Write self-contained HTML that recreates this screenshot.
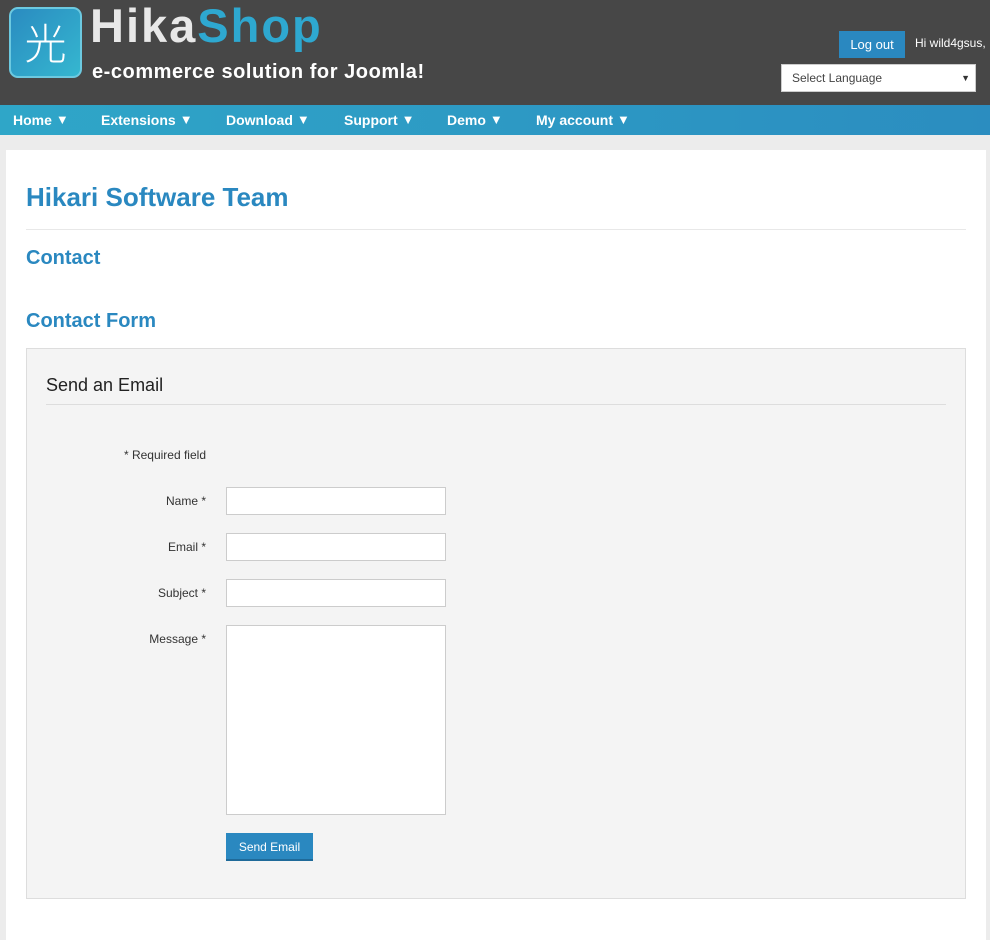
<!DOCTYPE html>
<html><head><style>
*{box-sizing:border-box;margin:0;padding:0}
body{width:990px;height:930px;overflow:hidden;background:#ececec;font-family:"Liberation Sans",Arial,sans-serif;position:relative}
.hdr{position:absolute;left:0;top:0;width:990px;height:105px;background:#474747}
.logo{position:absolute;left:9px;top:7px;width:73px;height:71px;border-radius:9px;background:linear-gradient(135deg,#2a8bc0,#35b7d0);border:2px solid #6cc9e0}
.logo span{position:absolute;left:0;top:8px;width:69px;text-align:center;color:#fff;font-size:42px;font-family:"Noto Sans CJK SC",sans-serif;font-weight:300;line-height:50px}
.brand{position:absolute;left:90px;top:-2px;font-size:47px;font-weight:bold;letter-spacing:2px}
.tag{position:absolute;left:92px;top:61px;color:#fff;font-size:20px;font-weight:bold;letter-spacing:0.55px}
.lo{position:absolute;left:839px;top:31px;width:66px;height:27px;background:#2a88c0;color:#fff;font-size:13px;text-align:center;line-height:27px}
.hi{position:absolute;left:915px;top:36px;color:#fff;font-size:12px}
.sel{position:absolute;left:781px;top:64px;width:195px;height:28px;background:#fff;border:1px solid #ccc;font-size:12px;color:#444;padding:6px 10px}
.sel b{position:absolute;right:5px;top:8px;font-size:9px;color:#333}
.nav{position:absolute;left:0;top:105px;width:990px;height:30px;background:linear-gradient(90deg,#2fa6c8,#2b8dc0)}
.nav span{position:absolute;top:7px;color:#fff;font-weight:bold;font-size:14px}
.nav i{font-style:normal;font-size:13px;margin-left:4px;position:relative;top:-1px}
.panel{position:absolute;left:6px;top:150px;width:980px;height:790px;background:#fff}
h1{position:absolute;left:26px;top:182px;color:#2a88c0;font-size:26px}
.hr{position:absolute;left:26px;width:940px;height:1px;background:#e8e8e8}
h2{position:absolute;left:26px;color:#2a88c0;font-size:20px}
.box{position:absolute;left:26px;top:348px;width:940px;height:551px;background:#f4f4f4;border:1px solid #ddd}
.lbl{position:absolute;font-size:12px;color:#333;text-align:right;width:120px;left:86px}
.inp{position:absolute;left:226px;width:220px;height:28px;background:#fff;border:1px solid #ccc}
.btn{position:absolute;left:226px;top:833px;width:87px;height:28px;background:#2a88c0;color:#fff;font-size:12px;text-align:center;line-height:28px;border-bottom:2px solid #1f6a99}
</style></head><body>
<div class="hdr">
<div class="logo"><span>光</span></div>
<div class="brand"><span style="color:#e8e8e8">Hika</span><span style="color:#2ea8d0">Shop</span></div>
<div class="tag">e-commerce solution for Joomla!</div>
<div class="lo">Log out</div><div class="hi">Hi wild4gsus,</div>
<div class="sel">Select Language<b>▼</b></div>
</div>
<div class="nav">
<span style="left:13px">Home<i>▼</i></span><span style="left:101px">Extensions<i>▼</i></span><span style="left:226px">Download<i>▼</i></span><span style="left:344px">Support<i>▼</i></span><span style="left:447px">Demo<i>▼</i></span><span style="left:536px">My account<i>▼</i></span>
</div>
<div class="panel"></div>
<h1>Hikari Software Team</h1>
<div class="hr" style="top:229px"></div>
<h2 style="top:247px">Contact</h2>
<h2 style="top:310px">Contact Form</h2>
<div class="box"></div>
<div style="position:absolute;left:46px;top:375px;font-size:18px;color:#222">Send an Email</div>
<div class="hr" style="left:46px;width:900px;top:404px;background:#ddd"></div>
<div class="lbl" style="top:448px">* Required field</div>
<div class="lbl" style="top:494px">Name *</div><div class="inp" style="top:487px"></div>
<div class="lbl" style="top:540px">Email *</div><div class="inp" style="top:533px"></div>
<div class="lbl" style="top:586px">Subject *</div><div class="inp" style="top:579px"></div>
<div class="lbl" style="top:632px">Message *</div><div class="inp" style="top:625px;height:190px"></div>
<div class="btn">Send Email</div>
</body></html>
